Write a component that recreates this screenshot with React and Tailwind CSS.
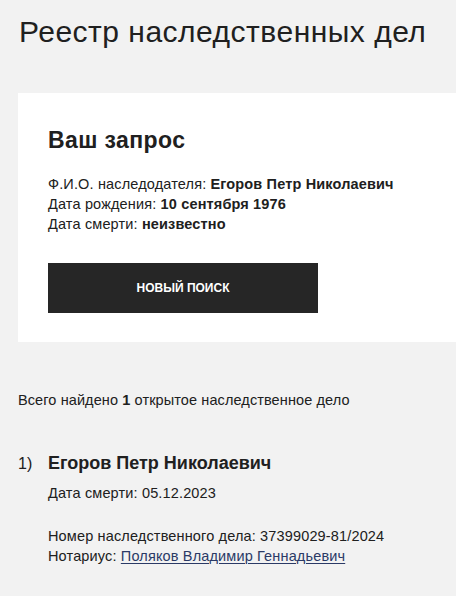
export default function App() {
  return (
    <div className="min-h-[596px] w-[456px] overflow-hidden bg-[#f2f2f2] text-[#202020] font-['Liberation_Sans',Arial,sans-serif]">
      <h1 className="pl-[19px] pt-[14px] text-[30px] leading-[36px] font-normal tracking-[0.5px]">Реестр наследственных дел</h1>
      <div className="ml-[18px] mt-[43px] bg-white pl-[30px] pt-[33px] pb-[29px]">
        <h2 className="text-[23px] leading-[28px] font-bold tracking-[0.4px]">Ваш запрос</h2>
        <div className="mt-[20px] text-[14.5px] leading-[20px] tracking-[0.15px]">
          <div>Ф.И.О. наследодателя: <b>Егоров Петр Николаевич</b></div>
          <div>Дата рождения: <b>10 сентября 1976</b></div>
          <div>Дата смерти: <b>неизвестно</b></div>
        </div>
        <button className="mt-[29px] flex h-[50px] w-[270px] items-center justify-center bg-[#262626] text-[12px] font-bold uppercase text-white">
          Новый поиск
        </button>
      </div>
      <div className="pl-[18px] pt-[48px] text-[14.5px] leading-[20px] tracking-[0.1px]">
        Всего найдено <b>1</b> открытое наследственное дело
      </div>
      <div className="mt-[41px] flex items-baseline pl-[18px]">
        <div className="w-[30px] text-[16px] leading-[24px]">1)</div>
        <div>
          <div className="text-[18px] font-bold leading-[24px]">Егоров Петр Николаевич</div>
          <div className="mt-[8px] text-[14.5px] leading-[20px] tracking-[0.15px]">Дата смерти: 05.12.2023</div>
          <div className="mt-[23px] text-[14.5px] leading-[20px] tracking-[0.15px]">
            <div>Номер наследственного дела: 37399029-81/2024</div>
            <div>
              Нотариус:{" "}
              <a className="text-[#2b3a66] underline decoration-[#2b3a66] decoration-1 underline-offset-[2px]">Поляков Владимир Геннадьевич</a>
            </div>
          </div>
        </div>
      </div>
    </div>
  );
}
